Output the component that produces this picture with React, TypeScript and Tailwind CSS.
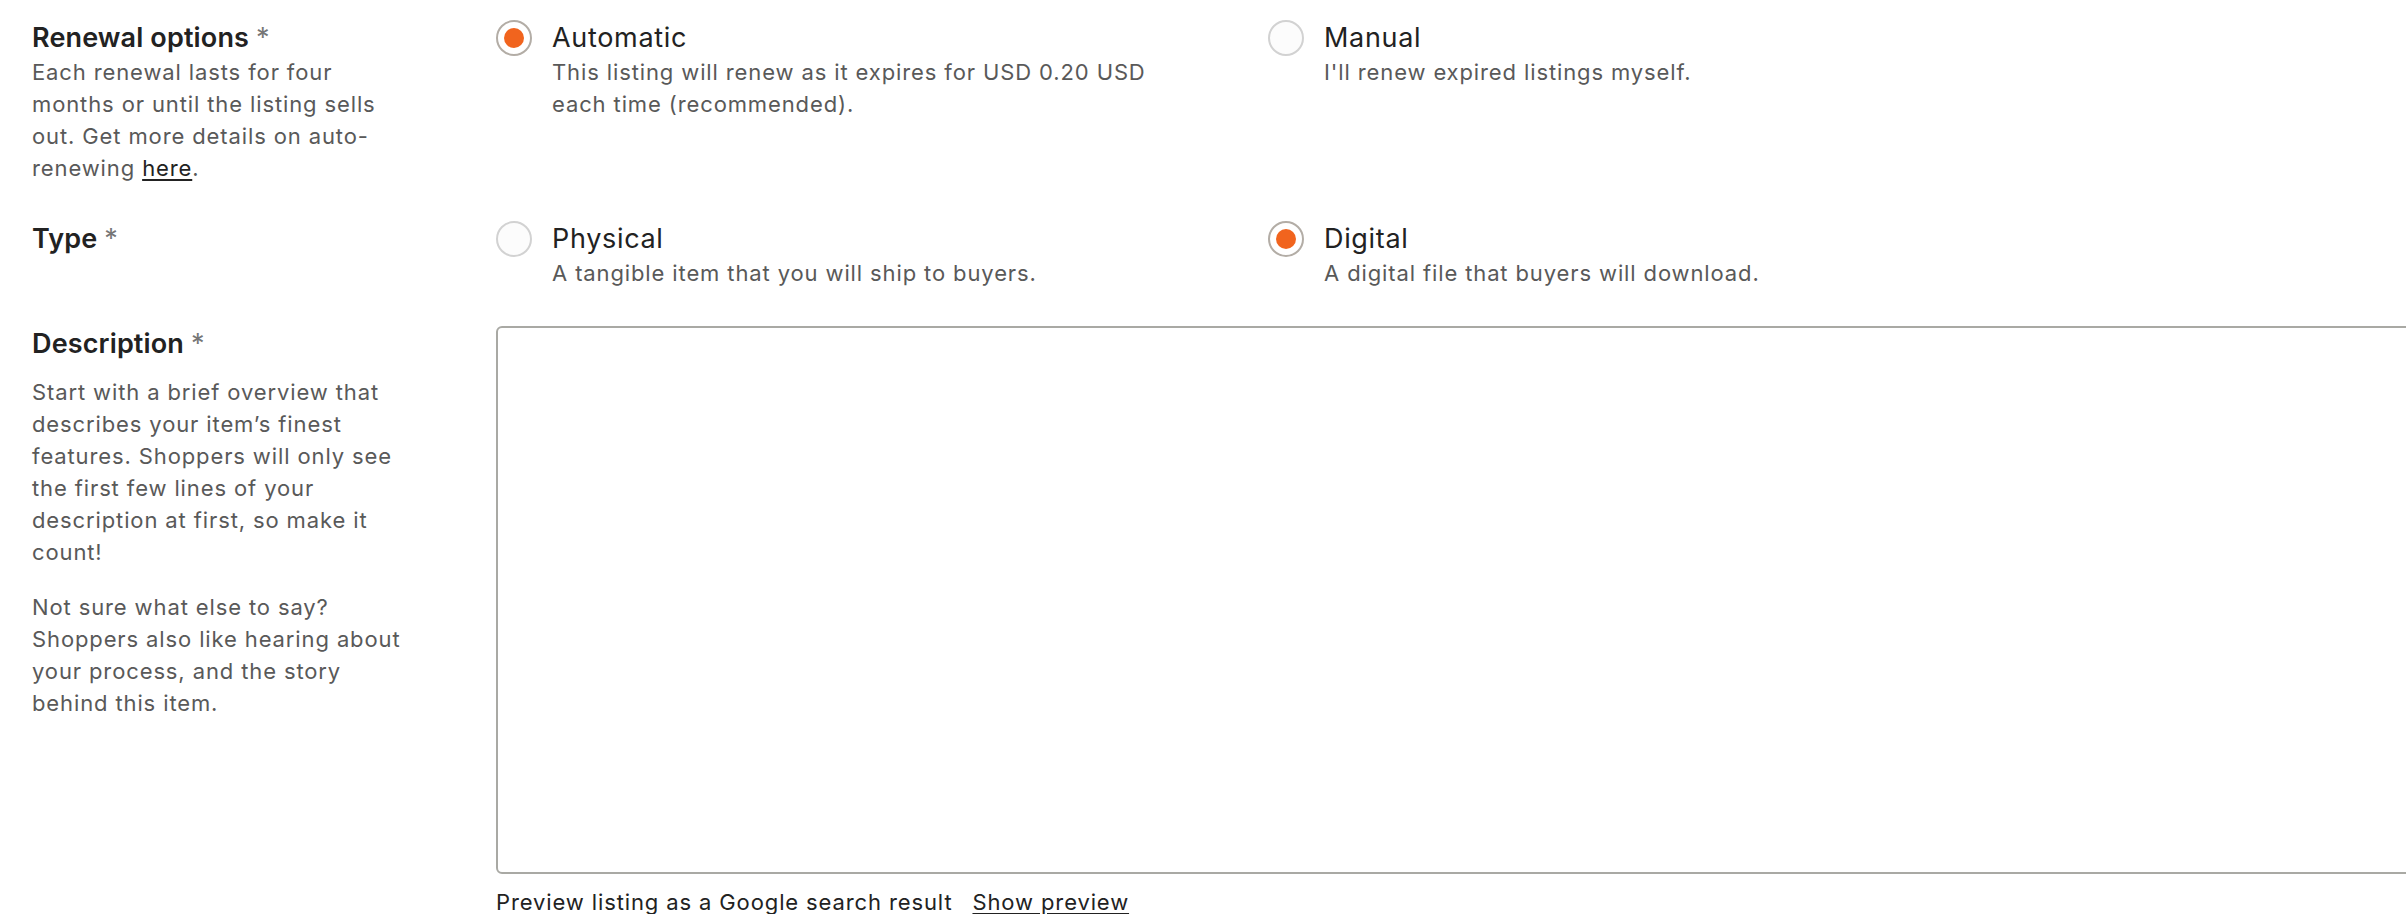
function Radio({ checked }: { checked?: boolean }) {
  return checked ? (
    <span className="flex h-9 w-9 shrink-0 items-center justify-center rounded-full border-2 border-[#b3ada6] bg-white">
      <span className="h-5 w-5 rounded-full bg-[#f1641e]" />
    </span>
  ) : (
    <span className="h-9 w-9 shrink-0 rounded-full border-2 border-[#d2d2d2] bg-[#fcfcfc]" />
  );
}

function Option({ title, text, checked }: { title: string; text: string; checked?: boolean }) {
  return (
    <label className="flex w-[772px] shrink-0 gap-5">
      <Radio checked={checked} />
      <div className="max-w-[620px]">
        <div className="text-[27px] leading-9 tracking-[0.025em] text-[#222222]">{title}</div>
        <div className="text-[22px] leading-8 tracking-[0.04em] text-[#595959]">{text}</div>
      </div>
    </label>
  );
}

function Label({ children }: { children: React.ReactNode }) {
  return (
    <div className="text-[27px] font-semibold leading-9 tracking-[0.005em] text-[#222222]">
      {children} <span className="font-normal text-[#767676]">*</span>
    </div>
  );
}

export default function App() {
  return (
    <div className="min-h-screen overflow-hidden bg-white pl-8 pt-5 font-[Inter,sans-serif]">
      <div className="flex flex-col gap-[37px]">
        {/* Renewal */}
        <div className="flex">
          <div className="w-[464px] shrink-0 pr-[78px]">
            <Label>Renewal options</Label>
            <p className="text-[22px] leading-8 tracking-[0.04em] text-[#595959]">
              Each renewal lasts for four months or until the listing sells out. Get more details on auto-renewing{" "}
              <a className="text-[#222222] underline underline-offset-[3px]">here</a>.
            </p>
          </div>
          <div className="flex">
            <Option
              checked
              title="Automatic"
              text="This listing will renew as it expires for USD 0.20 USD each time (recommended)."
            />
            <Option title="Manual" text="I'll renew expired listings myself." />
          </div>
        </div>

        {/* Type */}
        <div className="flex">
          <div className="w-[464px] shrink-0">
            <Label>Type</Label>
          </div>
          <div className="flex">
            <Option title="Physical" text="A tangible item that you will ship to buyers." />
            <Option checked title="Digital" text="A digital file that buyers will download." />
          </div>
        </div>

        {/* Description */}
        <div className="flex">
          <div className="w-[464px] shrink-0 pr-[78px] text-[22px] leading-8 tracking-[0.04em] text-[#595959]">
            <Label>Description</Label>
            <p className="mt-[14px]">
              Start with a brief overview that describes your item’s finest features. Shoppers will only see the first few
              lines of your description at first, so make it count!
            </p>
            <p className="mt-[23px]">
              Not sure what else to say? Shoppers also like hearing about your process, and the story behind this item.
            </p>
          </div>
          <div className="w-[1960px] shrink-0">
            <textarea className="block h-[548px] w-full resize-none rounded-md border-2 border-[#a9a9a4] bg-white outline-none" />
            <div className="mt-3 flex gap-[20px] text-[22px] leading-8 tracking-[0.04em] text-[#222222]">
              <span>Preview listing as a Google search result</span>
              <a className="underline underline-offset-[3px]">Show preview</a>
            </div>
          </div>
        </div>
      </div>
    </div>
  );
}
